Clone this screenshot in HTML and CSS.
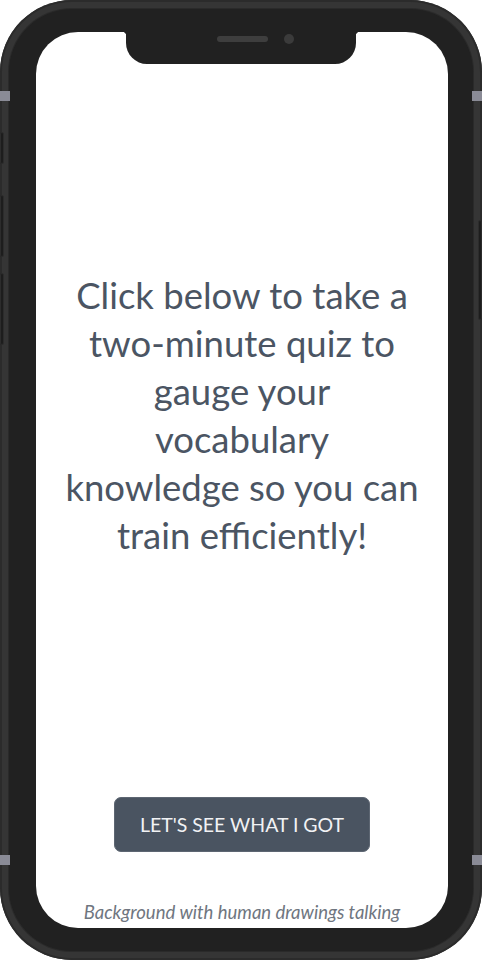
FILE: index.html
```html
<!DOCTYPE html>
<html lang="en">
<head>
<meta charset="utf-8">
<title>Vocabulary quiz</title>
<link rel="stylesheet" href="styles.css">
</head>
<body>
<div class="phone">
  <span class="mark mark-lt"></span>
  <span class="mark mark-lb"></span>
  <span class="mark mark-rt"></span>
  <span class="mark mark-rb"></span>
  <span class="side side-l1"></span>
  <span class="side side-l2"></span>
  <span class="side side-l3"></span>
  <span class="side side-r1"></span>
  <div class="bezel">
    <div class="screen">
      <div class="notch">
        <span class="speaker"></span>
        <span class="camera"></span>
      </div>
      <main class="main">
        <p class="intro">Click below to take a two-minute quiz to gauge your vocabulary knowledge so you can train efficiently!</p>
      </main>
      <button class="cta" type="button">LET'S SEE WHAT I GOT</button>
      <p class="caption">Background with human drawings talking</p>
    </div>
  </div>
</div>
</body>
</html>
```

FILE: styles.css
```css
html, body {
  margin: 0;
  padding: 0;
  background: #ffffff;
}

.phone {
  position: relative;
  width: 482px;
  height: 960px;
  box-sizing: border-box;
  padding: 9px;
  border-radius: 72px;
  background: #353535;
  box-shadow: inset 0 0 0 2px #2b2b2b;
}

.bezel {
  height: 100%;
  box-sizing: border-box;
  padding: 23px 25px 23px 27px;
  border-radius: 63px;
  background: #212121;
  box-shadow: 0 0 0 1px #2a2a2a;
}

.screen {
  position: relative;
  height: 100%;
  display: flex;
  flex-direction: column;
  align-items: center;
  border-radius: 42px;
  background: #ffffff;
  overflow: hidden;
}

.notch {
  position: absolute;
  top: 0;
  left: 90px;
  width: 230px;
  height: 32px;
  background: #212121;
  border-radius: 0 0 21px 21px;
}

.notch::before,
.notch::after {
  content: "";
  position: absolute;
  top: 0;
  width: 4px;
  height: 4px;
}

.notch::before {
  left: -4px;
  background: radial-gradient(circle at 0 100%, transparent 4px, #212121 4.5px);
}

.notch::after {
  right: -4px;
  background: radial-gradient(circle at 100% 100%, transparent 4px, #212121 4.5px);
}

.speaker {
  position: absolute;
  top: 4px;
  left: 91px;
  width: 51px;
  height: 6px;
  border-radius: 3px;
  background: #3e3e3e;
}

.camera {
  position: absolute;
  top: 2px;
  left: 158px;
  width: 10px;
  height: 10px;
  border-radius: 50%;
  background: #3b3b3b;
}

.main {
  flex: 1;
  display: flex;
  align-items: center;
  justify-content: center;
  width: 100%;
}

.intro {
  margin: 0;
  width: 355px;
  text-align: center;
  font-family: Lato, "Open Sans", sans-serif;
  font-size: 36.5px;
  line-height: 48px;
  color: #4b5563;
}

.cta {
  width: 256px;
  height: 55px;
  padding: 0;
  border: 1px solid #5d6672;
  border-radius: 7px;
  background: #4a5461;
  color: #f1f2f4;
  font-family: Lato, "Open Sans", sans-serif;
  font-size: 19.5px;
}

.caption {
  margin: 49px 0 5px;
  font-family: Lato, "Open Sans", sans-serif;
  font-style: italic;
  font-size: 18.5px;
  line-height: 22px;
  color: #6f7680;
}

.mark {
  position: absolute;
  width: 10px;
  height: 10px;
  background: #8a8b96;
}

.mark-lt { left: 0; top: 91px; }
.mark-lb { left: 0; top: 855px; }
.mark-rt { right: 0; top: 91px; }
.mark-rb { right: 0; top: 855px; }

.side {
  position: absolute;
  width: 4px;
  background: #1d1d1d;
  border: 1px solid #2c2c2c;
  border-radius: 2px;
  box-sizing: border-box;
}

.side-l1 { left: 0; top: 132px; height: 32px; }
.side-l2 { left: 0; top: 195px; height: 62px; }
.side-l3 { left: 0; top: 273px; height: 72px; }
.side-r1 { right: 0; top: 220px; height: 100px; }
```
